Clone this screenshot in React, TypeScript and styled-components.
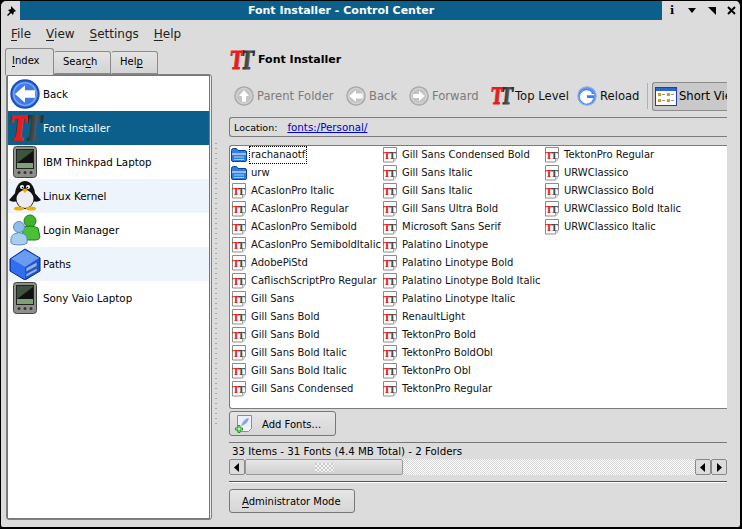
import styled, { createGlobalStyle } from "styled-components";

const Global = createGlobalStyle`
  html, body {
    margin: 0;
    padding: 0;
    width: 742px;
    height: 529px;
    overflow: hidden;
    background: #000;
  }
  * { box-sizing: border-box; }
  svg { flex: none; display: block; }
`;

const Window = styled.div`
  width: 742px;
  height: 529px;
  background: #dcdcdc;
  border: 1px solid #000;
  border-radius: 6px 6px 4px 4px;
  border-right-width: 2px;
  border-bottom-width: 2px;
  overflow: hidden;
  display: flex;
  flex-direction: column;
  font-family: "DejaVu Sans", sans-serif;
  font-size: 10px;
  color: #000;
`;

const TitleBar = styled.div`
  height: 19px;
  display: flex;
  flex: none;
`;

const TitleButton = styled.div<{ $w: number }>`
  width: ${(p) => p.$w}px;
  flex: none;
  display: flex;
  align-items: center;
  justify-content: center;
`;

const InfoGlyph = styled.b`
  font-family: "DejaVu Serif", serif;
  font-size: 11px;
`;

const TitleText = styled.div`
  flex: 1;
  background: #0b5f8a;
  color: #fff;
  font-weight: bold;
  font-size: 11px;
  text-align: center;
  line-height: 19px;
`;

const MenuBar = styled.div`
  height: 26px;
  flex: none;
  display: flex;
  align-items: center;
  padding: 1px 0 0 10px;
  gap: 15px;
  font-size: 12px;
  color: #222;
`;

const U = styled.span`
  text-decoration: underline;
  text-underline-offset: 2px;
`;

const Body = styled.div`
  flex: 1;
  display: flex;
  min-height: 0;
`;

const Side = styled.div`
  width: 211px;
  flex: none;
  padding: 2px 0 7px 4px;
  display: flex;
  flex-direction: column;
`;

const Tabs = styled.div`
  height: 26px;
  flex: none;
  display: flex;
  align-items: flex-end;
`;

const Tab = styled.div<{ $active?: boolean; $w: number }>`
  width: ${(p) => p.$w}px;
  height: ${(p) => (p.$active ? 27 : 23)}px;
  padding: ${(p) => (p.$active ? "6px 0 0 6px" : "4px 0 0 8px")};
  border: 1px solid #8a8a8a;
  border-bottom: ${(p) => (p.$active ? "none" : "1px solid #8a8a8a")};
  border-left-color: ${(p) => (p.$active ? "#8a8a8a" : "transparent")};
  border-radius: 3px 3px 0 0;
  background: ${(p) =>
    p.$active ? "#dcdcdc" : "linear-gradient(#e4e4e4, #d4d4d4)"};
  position: relative;
  z-index: ${(p) => (p.$active ? 2 : 1)};
  margin-bottom: ${(p) => (p.$active ? "-1px" : "0")};
`;

const SidePanel = styled.div`
  flex: 1;
  margin-left: 1px;
  border: 1px solid #808080;
  border-radius: 3px;
  padding: 0 1px 0 0;
  background: #e8e8e8;
  display: flex;
`;

const SideList = styled.div`
  flex: 1;
  background: #fff;
  border: 1px solid #777;
  padding-top: 1px;
  font-size: 10.3px;
`;

const SideRow = styled.div<{ $selected?: boolean; $alt?: boolean }>`
  height: 34px;
  display: flex;
  align-items: center;
  gap: 2px;
  padding-left: 1px;
  background: ${(p) =>
    p.$selected ? "#0b5f8a" : p.$alt ? "#edf4fc" : "#fff"};
  color: ${(p) => (p.$selected ? "#fff" : "#000")};
`;

const IconSlot = styled.div`
  width: 32px;
  height: 32px;
  flex: none;
  display: flex;
  align-items: center;
  justify-content: center;
`;

const Splitter = styled.div`
  width: 17px;
  flex: none;
  display: flex;
  justify-content: flex-start;
  padding: 97px 0 0 3px;
`;

const Grip = styled.div`
  width: 2px;
  height: 282px;
  background: repeating-linear-gradient(#a8a8a8 0 1px, transparent 1px 5px);
`;

const Main = styled.div`
  flex: 1;
  min-width: 0;
  padding: 0 13px 0 0;
  display: flex;
  flex-direction: column;
`;

const Heading = styled.div`
  height: 27px;
  flex: none;
  display: flex;
  align-items: center;
  gap: 5px;
  font-weight: bold;
  font-size: 11px;
`;

const Toolbar = styled.div`
  height: 34px;
  flex: none;
  margin-top: 6px;
  display: flex;
  align-items: center;
  overflow: hidden;
  padding: 0 0 0 5px;
  white-space: nowrap;
  font-size: 11.6px;
`;

const ToolButton = styled.div<{ $off?: boolean; $w: number }>`
  width: ${(p) => p.$w}px;
  flex: none;
  display: flex;
  align-items: center;
  gap: 3px;
  color: ${(p) => (p.$off ? "#7b7b7b" : "#111")};
`;

const ToolSep = styled.div`
  width: 1px;
  height: 26px;
  background: #b0b0b0;
  flex: none;
  margin: 0 4px 0 0;
`;

const ActiveTool = styled.div`
  flex: none;
  width: 90px;
  height: 29px;
  display: flex;
  align-items: center;
  gap: 2px;
  padding-left: 2px;
  background: #c9c9c9;
  border: 1px solid #8c8c8c;
  border-right: none;
  border-radius: 3px 0 0 3px;
`;

const LocationBar = styled.div`
  height: 20px;
  flex: none;
  margin-top: 4px;
  display: flex;
  align-items: center;
  gap: 10px;
  padding: 0 0 0 4px;
  border: 1px solid #7c7c7c;
  border-right: none;
  border-radius: 3px 0 0 3px;
  font-size: 9.5px;
`;

const LocationLink = styled.span`
  color: #0000cc;
  text-decoration: underline;
  font-size: 10.3px;
`;

const FileList = styled.div`
  height: 264px;
  flex: none;
  margin-top: 8px;
  background: #fff;
  border: 1px solid #7c7c7c;
  border-right: none;
  border-radius: 3px 0 0 3px;
  display: flex;
  padding: 0 0 0 1px;
`;

const FileColumn = styled.div<{ $w: number }>`
  width: ${(p) => p.$w}px;
  flex: none;
  display: flex;
  flex-direction: column;
`;

const FileRow = styled.div`
  height: 18px;
  padding-bottom: 1px;
  display: flex;
  align-items: center;
  gap: 3px;
  white-space: nowrap;
  color: #111;
`;

const FileName = styled.span<{ $focus?: boolean }>`
  padding: 0 1px;
  line-height: 16px;
  outline: ${(p) => (p.$focus ? "1px dotted #000" : "none")};
`;

const PushButton = styled.div<{ $w: number; $h: number }>`
  width: ${(p) => p.$w}px;
  height: ${(p) => p.$h}px;
  flex: none;
  display: flex;
  align-items: center;
  background: linear-gradient(#e6e6e6, #d6d6d6);
  border: 1px solid #777;
  border-radius: 3px;
`;

const AddRow = styled.div`
  margin-top: 2px;
  flex: none;
`;

const StatusBar = styled.div`
  height: 17px;
  margin-top: 6px;
  flex: none;
  border-top: 1px solid #777;
  padding: 0 0 0 3px;
  line-height: 16px;
  white-space: nowrap;
  font-size: 10.25px;
`;

const ScrollBar = styled.div`
  height: 16px;
  flex: none;
  display: flex;
  background: repeating-conic-gradient(#fff 0 25%, #d4d4d4 0 50%) 0 0 / 2px 2px;
`;

const ScrollArrow = styled.div`
  width: 16px;
  flex: none;
  display: flex;
  align-items: center;
  justify-content: center;
  background: #dcdcdc;
  border: 1px solid #888;
  border-radius: 2px;
`;

const ScrollThumb = styled.div`
  width: 158px;
  flex: none;
  background: linear-gradient(#e6e6e6, #d0d0d0);
  border: 1px solid #999;
  border-radius: 2px;
  display: flex;
  align-items: center;
  justify-content: center;
`;

const ThumbGrip = styled.div`
  width: 19px;
  height: 9px;
  background: repeating-conic-gradient(#f4f4f4 0 25%, #cacaca 0 50%) 0 0 / 4px 4px;
`;

const ScrollFill = styled.div`
  flex: 1;
`;

const Rule = styled.div`
  height: 2px;
  flex: none;
  margin-top: 6px;
  background: #fff;
  border-top: 1px solid #555;
`;

const FooterRow = styled.div`
  margin-top: 6px;
  flex: none;
`;

const ButtonLabel = styled.span<{ $pad: number }>`
  padding-left: ${(p) => p.$pad}px;
`;

const AddLabel = styled(ButtonLabel)`
  padding-top: 1px;
`;

const AddIconWrap = styled.div`
  margin-left: 5px;
  width: 18px;
  height: 18px;
  flex: none;
`;

// one gradient for the red and black halves of the TT logo
const TTGradient = () => (
  <svg width="0" height="0">
    <defs>
      <linearGradient id="tt-fill" x1="0" x2="1" y1="0" y2="0">
        <stop offset="0.52" stopColor="#e81c1c" />
        <stop offset="0.52" stopColor="#2a2a2a" />
        <stop offset="0.8" stopColor="#555" />
        <stop offset="1" stopColor="#222" />
      </linearGradient>
    </defs>
  </svg>
);

const TT = ({ size }: { size: number }) => (
  <svg width={size} height={size} viewBox="0 0 32 32" overflow="visible">
    <text
      transform="skewX(-6) scale(.8 1.1)"
      x="4"
      y="25"
      fontFamily="DejaVu Serif, serif"
      fontWeight="bold"
      fontSize="30"
      letterSpacing="-4"
      fill="url(#tt-fill)"
      stroke="url(#tt-fill)"
      strokeWidth="1.2"
    >
      TT
    </text>
  </svg>
);

const FontFile = () => (
  <svg width="16" height="16" viewBox="0 0 16 16">
    <path d="M1.500.5h13v11l-3 3.500h-10z" fill="#fff" stroke="#8c8c8c" />
    <path d="M11.500 15v-3.500h3" fill="#ddd" stroke="#aaa" />
    <text
      x="1.500"
      y="12"
      fontFamily="DejaVu Serif, serif"
      fontWeight="bold"
      fontSize="9.500"
      letterSpacing="-1.500"
      fill="url(#tt-fill)"
    >
      TT
    </text>
  </svg>
);

const FolderIcon = () => (
  <svg width="16" height="16" viewBox="0 0 16 16">
    <path d="M.5 3.500q0-2 2-2h3l1.500 2h7q1.500 0 1.500 1.500v8q0 1.500-1.500 1.500h-12q-1.500 0-1.500-1.500z" fill="#2f7fe0" stroke="#0a3fa8" />
    <path d="M1 7h14" stroke="#fff" />
    <path d="M3 10h10M3 12.500h10" stroke="#a8d0f8" />
  </svg>
);

const CircleIcon = ({ size, fill, rim, kind }: { size: number; fill: string; rim: string; kind: "up" | "left" | "right" | "reload" }) => {
  const arrows = {
    up: "M12 5l6 7h-3.500v7h-5v-7H6z",
    left: "M4 12l8-7v4h8v6h-8v4z",
    right: "M19 12l-7-6v3.500H5v5h7V18z",
    reload: "M17.500 7.500a8 8 0 1 0 2 7h-7.500v-3.500h8.500v-1.500l-3 0z",
  };
  return (
    <svg width={size} height={size} viewBox="0 0 24 24">
      <circle cx="12" cy="12" r="11" fill={fill} stroke={rim} strokeWidth="1.500" />
      <circle cx="12" cy="12" r="9" fill="none" stroke="#fff" strokeOpacity=".35" />
      <path d={arrows[kind]} fill="#fff" />
    </svg>
  );
};

const Pda = () => (
  <svg width="28" height="32" viewBox="0 0 28 32">
    <rect x="2.500" y="0.500" width="23" height="31" rx="3" fill="#8f8f8a" stroke="#444" />
    <rect x="5.500" y="3.500" width="17" height="19" fill="#3d553d" stroke="#222" />
    <path d="M6 17L22 5v12z" fill="#111" />
    <path d="M6 17h16v5H6z" fill="#7fa078" />
    <circle cx="8" cy="26.500" r="1.500" fill="#333" />
    <circle cx="14" cy="26.500" r="1.500" fill="#333" />
    <circle cx="20" cy="26.500" r="1.500" fill="#333" />
  </svg>
);

const Tux = () => (
  <svg width="32" height="32" viewBox="0 0 32 32">
    <path d="M8 11L0 20c2 2 6 2 8 1zM24 11l8 9c-2 2-6 2-8 1z" fill="#111" />
    <ellipse cx="16" cy="15" rx="10" ry="14" fill="#111" />
    <ellipse cx="16" cy="19" rx="8.500" ry="9" fill="#ecedf2" />
    <circle cx="13" cy="7" r="2" fill="#fff" />
    <circle cx="19" cy="7" r="2" fill="#fff" />
    <circle cx="13.500" cy="7.500" r=".8" fill="#000" />
    <circle cx="18.500" cy="7.500" r=".8" fill="#000" />
    <path d="M13 10l3-1.500 3 1.500-3 3z" fill="#f0b000" />
    <ellipse cx="10" cy="28.500" rx="5" ry="2" fill="#f0b000" />
    <ellipse cx="22" cy="28.500" rx="5" ry="2" fill="#f0b000" />
  </svg>
);

const Users = () => (
  <svg width="32" height="32" viewBox="0 0 32 32">
    <circle cx="21" cy="7" r="6" fill="#3fb32e" stroke="#1f7a18" />
    <path d="M13 14q8-4 16 0l2 9q-1 3-4 3H15z" fill="#49c038" stroke="#1f7a18" />
    <circle cx="10" cy="13" r="5.500" fill="#8fbcea" stroke="#5a8cc0" />
    <path d="M2 29q-1-7 3-9 5-3 10 0 4 2 3 9-1 2-8 2t-8-2z" fill="#a8cdf0" stroke="#5a8cc0" />
  </svg>
);

const Cube = () => (
  <svg width="32" height="32" viewBox="0 0 32 32">
    <path d="M1 11L16 1l15 9v13L16 32 1 23z" fill="#1e56d8" stroke="#0a2a90" />
    <path d="M2 11l14-9 14 8-14 9z" fill="#6a9cf0" />
    <path d="M16 19v12L2 23V11z" fill="#2f6ff0" />
    <path d="M17 20l11-6v4l-11 6zM17 26l11-6v3l-11 6z" fill="#8fb4ea" stroke="#1a3fa0" strokeWidth=".5" />
  </svg>
);

const ViewIcon = () => (
  <svg width="22" height="19" viewBox="0 0 22 19">
    <rect x=".5" y=".5" width="21" height="18" fill="#fff" stroke="#1c3fa8" />
    <rect x="1" y="1" width="20" height="3" fill="#2a66d8" />
    <rect x="3" y="6" width="3" height="3" fill="#e89018" />
    <rect x="12" y="6" width="3" height="3" fill="#e89018" />
    <rect x="3" y="12" width="3" height="3" fill="#e89018" />
    <rect x="12" y="12" width="3" height="3" fill="#e89018" />
    <path d="M7 7.500h3M16 7.500h3M7 13.500h3M16 13.500h3" stroke="#999" />
  </svg>
);

const AddIcon = () => (
  <svg width="18" height="18" viewBox="0 0 18 18">
    <path d="M2.500.5h14v13l-3 3h-11z" fill="#eef0fa" stroke="#8c8c8c" />
    <path d="M6 11q3-8 8-8-1 6-8 8z" fill="#8fa2e8" />
    <path d="M3 10.500h2v2.500h2.500v2H5v2.500H3V15H.5v-2H3z" fill="#bff0b0" stroke="#1a9a1a" />
  </svg>
);

const Triangle = ({ dir }: { dir: "left" | "right" }) => (
  <svg width="6" height="9" viewBox="0 0 6 9">
    <path d={dir === "left" ? "M5 0v9L0 4.500z" : "M1 0v9l5-4.500z"} fill="#000" />
  </svg>
);

const sideItems = [
  { label: "Back", icon: <CircleIcon size={30} fill="#3c7be8" rim="#1a4fc0" kind="left" /> },
  { label: "Font Installer", icon: <TT size={32} />, selected: true },
  { label: "IBM Thinkpad Laptop", icon: <Pda /> },
  { label: "Linux Kernel", icon: <Tux />, alt: true },
  { label: "Login Manager", icon: <Users /> },
  { label: "Paths", icon: <Cube />, alt: true },
  { label: "Sony Vaio Laptop", icon: <Pda /> },
];

const fileColumns: { w: number; names: string[] }[] = [
  {
    w: 151,
    names: [
      "rachanaotf",
      "urw",
      "ACaslonPro Italic",
      "ACaslonPro Regular",
      "ACaslonPro Semibold",
      "ACaslonPro SemiboldItalic",
      "AdobePiStd",
      "CaflischScriptPro Regular",
      "Gill Sans",
      "Gill Sans Bold",
      "Gill Sans Bold",
      "Gill Sans Bold Italic",
      "Gill Sans Bold Italic",
      "Gill Sans Condensed",
    ],
  },
  {
    w: 162,
    names: [
      "Gill Sans Condensed Bold",
      "Gill Sans Italic",
      "Gill Sans Italic",
      "Gill Sans Ultra Bold",
      "Microsoft Sans Serif",
      "Palatino Linotype",
      "Palatino Linotype Bold",
      "Palatino Linotype Bold Italic",
      "Palatino Linotype Italic",
      "RenaultLight",
      "TektonPro Bold",
      "TektonPro BoldObl",
      "TektonPro Obl",
      "TektonPro Regular",
    ],
  },
  {
    w: 160,
    names: [
      "TektonPro Regular",
      "URWClassico",
      "URWClassico Bold",
      "URWClassico Bold Italic",
      "URWClassico Italic",
    ],
  },
];

export default function App() {
  return (
    <Window>
      <Global />
      <TitleBar>
        <TitleButton $w={19}>
          <svg width="10" height="10" viewBox="0 0 10 10">
            <path d="M5 0l5 5-2 1-1 3-2-2-3 3-1-1 3-3-2-2 3-1z" fill="#000" />
          </svg>
        </TitleButton>
        <TitleText>Font Installer - Control Center</TitleText>
        <TitleButton $w={20}>
          <InfoGlyph>i</InfoGlyph>
        </TitleButton>
        <TitleButton $w={20}>
          <svg width="8" height="5" viewBox="0 0 8 5"><path d="M0 0h8L4 5z" fill="#000" /></svg>
        </TitleButton>
        <TitleButton $w={20}>
          <svg width="8" height="8" viewBox="0 0 8 8"><path d="M0 0h8v8z" fill="#000" /></svg>
        </TitleButton>
        <TitleButton $w={18}>
          <svg width="9" height="9" viewBox="0 0 9 9"><path d="M1 1l7 7M8 1L1 8" stroke="#000" strokeWidth="2" /></svg>
        </TitleButton>
      </TitleBar>
      <TTGradient />
      <MenuBar>
        <span><U>F</U>ile</span>
        <span><U>V</U>iew</span>
        <span><U>S</U>ettings</span>
        <span><U>H</U>elp</span>
      </MenuBar>
      <Body>
        <Side>
          <Tabs>
            <Tab $active $w={49}><U>I</U>ndex</Tab>
            <Tab $w={57}>Sear<U>c</U>h</Tab>
            <Tab $w={47}>Hel<U>p</U></Tab>
          </Tabs>
          <SidePanel>
            <SideList>
              {sideItems.map((item) => (
                <SideRow key={item.label} $selected={item.selected} $alt={item.alt}>
                  <IconSlot>{item.icon}</IconSlot>
                  {item.label}
                </SideRow>
              ))}
            </SideList>
          </SidePanel>
        </Side>
        <Splitter>
          <Grip />
        </Splitter>
        <Main>
          <Heading>
            <TT size={24} />
            Font Installer
          </Heading>
          <Toolbar>
            <ToolButton $off $w={112}>
              <CircleIcon size={20} fill="#c4c4c4" rim="#a8a8a8" kind="up" />
              Parent Folder
            </ToolButton>
            <ToolButton $off $w={63}>
              <CircleIcon size={20} fill="#c4c4c4" rim="#a8a8a8" kind="left" />
              Back
            </ToolButton>
            <ToolButton $off $w={81}>
              <CircleIcon size={20} fill="#c4c4c4" rim="#a8a8a8" kind="right" />
              Forward
            </ToolButton>
            <ToolButton $w={87}>
              <TT size={22} />
              Top Level
            </ToolButton>
            <ToolButton $w={70}>
              <CircleIcon size={20} fill="#3c7be8" rim="#8ab0ee" kind="reload" />
              Reload
            </ToolButton>
            <ToolSep />
            <ActiveTool>
              <ViewIcon />
              Short View
            </ActiveTool>
          </Toolbar>
          <LocationBar>
            Location:
            <LocationLink>fonts:/Personal/</LocationLink>
          </LocationBar>
          <FileList>
            {fileColumns.map((col) => (
              <FileColumn key={col.w} $w={col.w}>
                {col.names.map((name, i) => (
                  <FileRow key={name + i}>
                    {col.w === 151 && i < 2 ? <FolderIcon /> : <FontFile />}
                    <FileName $focus={name === "rachanaotf"}>{name}</FileName>
                  </FileRow>
                ))}
              </FileColumn>
            ))}
          </FileList>
          <AddRow>
            <PushButton $w={107} $h={25}>
              <AddIconWrap><AddIcon /></AddIconWrap>
              <AddLabel $pad={9}>Add Fonts...</AddLabel>
            </PushButton>
          </AddRow>
          <StatusBar>33 Items - 31 Fonts (4.4 MB Total) - 2 Folders</StatusBar>
          <ScrollBar>
            <ScrollArrow><Triangle dir="left" /></ScrollArrow>
            <ScrollThumb><ThumbGrip /></ScrollThumb>
            <ScrollFill />
            <ScrollArrow><Triangle dir="left" /></ScrollArrow>
            <ScrollArrow><Triangle dir="right" /></ScrollArrow>
          </ScrollBar>
          <Rule />
          <FooterRow>
            <PushButton $w={126} $h={24}>
              <ButtonLabel $pad={12}><U>A</U>dministrator Mode</ButtonLabel>
            </PushButton>
          </FooterRow>
        </Main>
      </Body>
    </Window>
  );
}
